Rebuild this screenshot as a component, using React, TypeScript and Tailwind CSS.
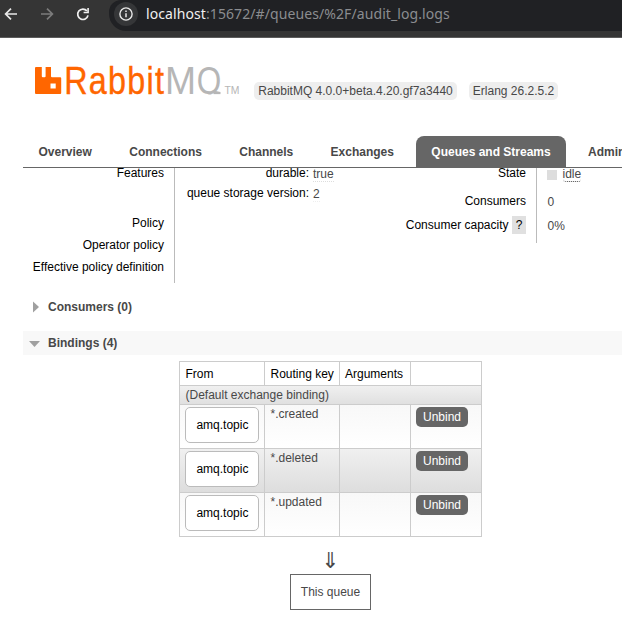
const tabs = ['Overview', 'Connections', 'Channels', 'Exchanges', 'Queues and Streams', 'Admin'];
const keys = ['*.created', '*.deleted', '*.updated'];

function BrowserBar() {
  return (
    <div className="flex h-[38px] items-start border-b border-[#5c5c5c] bg-[#353535]">
      <div className="flex h-7 w-[109px] shrink-0 items-center">
        <svg className="h-7 w-[109px]" viewBox="0 0 109 28" fill="none" strokeWidth="1.7">
          <path d="M17 14H6M11 8.6L5.6 14L11 19.4" stroke="#e8e8e8" />
          <path d="M41 14H52M47 8.6L52.4 14L47 19.4" stroke="#7c7c7c" />
          <path d="M86.9 10.9A5.2 5.2 0 1 0 88 15.4" stroke="#f0f0f0" />
          <path d="M88.9 8V13.3H83.6V11.7H87.3V8Z" fill="#f0f0f0" />
        </svg>
      </div>
      <div className="flex h-[31px] flex-1 items-start overflow-hidden rounded-bl-[17px] rounded-tl-[12px] bg-[#202124] pl-[5px]">
        <div className="mt-[2px] flex size-6 shrink-0 items-center justify-center rounded-full bg-[#353638]">
          <svg className="size-6" viewBox="0 0 24 24" fill="none" stroke="#e8e8e8">
            <circle cx="12" cy="12" r="6.1" strokeWidth="1.4" />
            <path d="M12 11.2V15.3M12 8.6V10" strokeWidth="1.5" />
          </svg>
        </div>
        <div className="ml-2 mt-1 whitespace-nowrap font-['Noto_Sans',sans-serif] text-[14px] leading-5 tracking-[0.09px] text-[#8b8d90]">
          <span className="text-[#f0f0f0]">localhost</span>:15672/#/queues/%2F/audit_log.logs
        </div>
      </div>
    </div>
  );
}

function Logo() {
  return (
    <svg className="h-[40px] w-[208px] shrink-0" viewBox="0 0 208 40" fontFamily="'Liberation Sans', Arial, sans-serif">
      <clipPath id="baseline">
        <rect x="0" y="0" width="208" height="34.5" />
      </clipPath>
      <path
        fillRule="evenodd"
        fill="#ff6600"
        d="M1 7H6.8V16.3Q6.8 17.3 7.8 17.3H9.6Q10.6 17.3 10.6 16.3V7H16V16.3Q16 17.3 17 17.3H25.2Q26.2 17.3 26.2 18.3V33Q26.2 34 25.2 34H1Q0 34 0 33V8Q0 7 1 7ZM15.5 23.5V28.5H20.7V23.5Z"
      />
      <g fontSize="38">
        <text transform="translate(29.2 34) scale(.85 1)" fill="#ff6600" stroke="#ff6600" strokeWidth="0.4" letterSpacing="1.500">Rabbit</text>
        <g clipPath="url(#baseline)" fill="#b6b6b6">
          <text transform="translate(130 34) scale(.98 1)">M</text>
          <text transform="translate(161.800 34) scale(.83 1)">Q</text>
          <path d="M178.500 30.500L185.500 32V34.300H178.500Z" />
        </g>
      </g>
      <text x="189.500" y="34" fontSize="10" fill="#b6b6b6" textLength="15" lengthAdjust="spacingAndGlyphs">TM</text>
    </svg>
  );
}

function Facts() {
  return (
    <div className="flex h-[116px] overflow-hidden text-black">
      <div className="h-[115px] w-[152px] border-r border-[#bbb] pr-[10px] text-right">
        <div className="-mt-[2px] h-[50px]">Features</div>
        <div className="h-[22px]">Policy</div>
        <div className="h-[22px]">Operator policy</div>
        <div className="h-[22px]">Effective policy definition</div>
      </div>
      <div className="-mt-[2px] w-[134px] text-right">
        <div className="h-5">durable:</div>
        <div className="h-5">queue storage version:</div>
      </div>
      <div className="-mt-px ml-1 w-[80px] text-[#484848]">
        <div className="h-5"><span className="inline-block h-[15px] border-b border-dotted border-[#ddd]">true</span></div>
        <div className="h-5"><span className="inline-block h-[15px] border-b border-dotted border-[#eee]">2</span></div>
      </div>
      <div className="h-[75px] w-[144px] border-r border-[#bbb] pr-[10px] text-right">
        <div className="-mt-[2px] h-7">State</div>
        <div className="h-[22px]">Consumers</div>
        <div className="flex justify-end leading-[18px]">
          Consumer capacity
          <span className="ml-[3.5px] w-[14px] bg-[#e0e0e0] text-center">?</span>
        </div>
      </div>
      <div className="-mt-px pl-[10px] text-[#484848]">
        <div className="flex h-7">
          <span className="mr-[5.5px] mt-[3px] size-[10px] bg-[#ddd]" />
          <span className="h-[15px] rounded-[3px] border-b border-dotted border-[#484848]">idle</span>
        </div>
        <div className="h-6 pl-[0.5px]">0</div>
        <div className="pl-[0.5px]">0%</div>
      </div>
    </div>
  );
}

function Bindings() {
  return (
    <div className="ml-[156px] mt-[6px] grid w-[303px] grid-cols-[85px_75px_71px_71px] border-l border-t border-[#ccc]">
      {['From', 'Routing key', 'Arguments', ''].map((h, i) => (
        <div key={i} className={`h-6 whitespace-nowrap border-b border-r border-[#ccc] pt-[5px] text-black ${i === 2 ? 'pl-[5px]' : 'pl-[5.5px]'}`}>{h}</div>
      ))}
      <div className="col-span-4 h-[19px] border-b border-r border-[#ccc] bg-linear-to-b from-[#f0f0f0] to-[#e0e0e0] pl-[5.5px] pt-[2px]">
        (Default exchange binding)
      </div>
      {keys.map((key, i) => (
        <div
          key={key}
          className={`col-span-4 grid h-11 grid-cols-subgrid bg-linear-to-b ${i === 1 ? 'from-[#f0f0f0] to-[#dddddd]' : 'from-[#f8f8f8] to-white'}`}
        >
          <div className="border-b border-r border-[#ccc] pl-[5px] pt-[2px]">
            <div className="flex h-9 w-[74px] items-center justify-center rounded-[5px] border border-[#bbb] bg-white pl-[0.8px] text-black">amq.topic</div>
          </div>
          <div className="border-b border-r border-[#ccc] pl-[5.5px] pt-[2px]">{key}</div>
          <div className="border-b border-r border-[#ccc]" />
          <div className="border-b border-r border-[#ccc] pl-[5px] pt-[2px]">
            <button className="flex h-5 w-[52px] items-center justify-center rounded-[5px] bg-[#666] text-white">Unbind</button>
          </div>
        </div>
      ))}
    </div>
  );
}

export default function App() {
  return (
    <div className="h-[624px] w-[622px] overflow-hidden bg-white font-['Liberation_Sans',Arial,sans-serif] text-[12px] leading-[14px] text-[#484848]">
      <BrowserBar />
      <header className="flex h-[98px] pl-[35px] pt-[22px]">
        <Logo />
        <div className="mt-[22px] flex h-[18px] gap-3 pl-[11px] leading-[18px]">
          <span className="w-[203px] whitespace-nowrap rounded-[5px] bg-[#eee] text-center">RabbitMQ 4.0.0+beta.4.20.gf7a3440</span>
          <span className="w-[89px] whitespace-nowrap rounded-[5px] bg-[#eee] text-center">Erlang 26.2.5.2</span>
        </div>
      </header>
      <main className="ml-[23px]">
        <nav className="flex h-8 gap-[7.35px] overflow-hidden border-b border-[#666] pl-[0.5px] font-bold">
          {tabs.map((tab) => (
            <div
              key={tab}
              className={`shrink-0 whitespace-nowrap rounded-t-[8px] px-[15px] leading-8 ${tab === 'Queues and Streams' ? 'bg-[#666] text-white' : ''}`}
            >
              {tab}
            </div>
          ))}
        </nav>
        <Facts />
        <h2 className="mt-[11px] flex h-6 items-center font-bold">
          <svg className="h-6 w-[25px]" viewBox="0 0 25 24"><path d="M10 6.500V17.500L16 12Z" fill="#a0a0a0" /></svg>
          Consumers (0)
        </h2>
        <h2 className="mt-3 flex h-6 items-center bg-[#f8f8f8] font-bold">
          <svg className="h-6 w-[25px]" viewBox="0 0 25 24"><path d="M6 10H17L11.500 16Z" fill="#a0a0a0" /></svg>
          Bindings (4)
        </h2>
        <Bindings />
        <div className="ml-[156px] mt-[10px] flex w-[303px] flex-col items-center">
          <div className="h-[27px] font-['DejaVu_Sans',sans-serif] text-[22px] leading-[27px]">⇓</div>
          <div className="flex h-9 w-[81px] items-center justify-center border border-[#666]">This queue</div>
        </div>
      </main>
    </div>
  );
}
